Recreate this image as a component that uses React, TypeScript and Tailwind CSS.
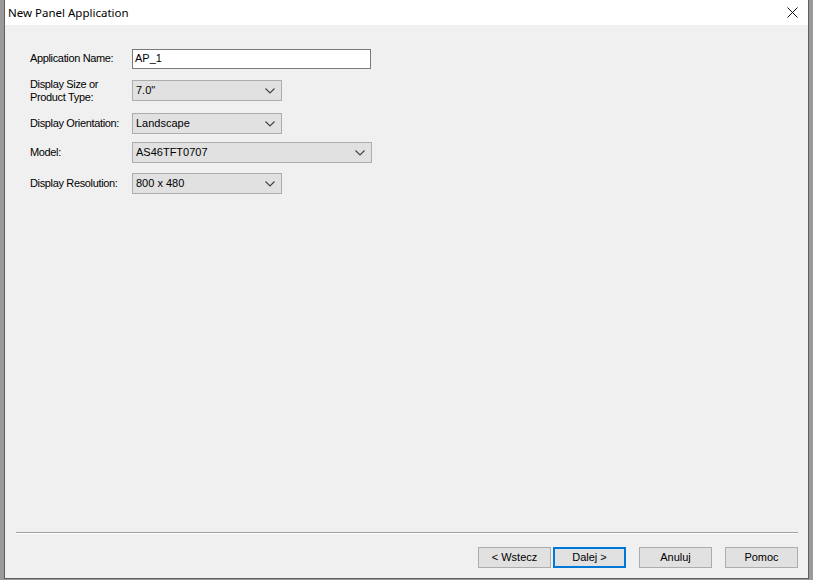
import React from "react";

function Chevron() {
  return (
    <svg width="10" height="6" viewBox="0 0 10 6" className="shrink-0">
      <path d="M0.5 0.5 L5 5 L9.5 0.5" fill="none" stroke="#404040" strokeWidth="1.1" />
    </svg>
  );
}

function Combo({ value, width }: { value: string; width: string }) {
  return (
    <div className={`${width} h-[21px] bg-[#e1e1e1] border border-[#adadad] flex items-center justify-between pl-[3px] pr-[3px]`}>
      <span className="text-[11px] leading-none text-black">{value}</span>
      <span className="w-[16px] flex justify-center">
        <Chevron />
      </span>
    </div>
  );
}

function Row({ label, children, className = "" }: { label: React.ReactNode; children: React.ReactNode; className?: string }) {
  return (
    <div className={`flex items-center h-[21px] ${className}`}>
      <div className="w-[102px] text-[11px] leading-[13px] text-black tracking-[-0.35px]">{label}</div>
      {children}
    </div>
  );
}

function Btn({ label, primary = false, className = "" }: { label: string; primary?: boolean; className?: string }) {
  return (
    <div
      className={`w-[73px] h-[21px] bg-[#e1e1e1] flex items-center justify-center text-[11px] text-black ${
        primary ? "border-2 border-[#0078d7]" : "border border-[#adadad]"
      } ${className}`}
    >
      {label}
    </div>
  );
}

export default function App() {
  return (
    <div className="w-[813px] h-[580px] bg-[#9a9a9a] overflow-hidden" style={{ fontFamily: '"Liberation Sans", Arial, sans-serif' }}>
      <div className="ml-[4px] w-[805px] h-[579px] flex flex-col border-l border-r border-b border-[#5f5f5f] bg-[#f0f0f0]">
        {/* Title bar */}
        <div className="h-[25px] bg-white flex items-center justify-between pl-[3px] pr-[8px]">
          <span className="text-[11.5px] text-black" style={{ fontFamily: '"Noto Sans", "Open Sans", sans-serif' }}>
            New Panel Application
          </span>
          <svg width="11" height="11" viewBox="0 0 11 11" className="mr-[2px]">
            <path d="M0.5 0.5 L10.5 10.5 M10.5 0.5 L0.5 10.5" stroke="#111" strokeWidth="1" />
          </svg>
        </div>

        {/* Form */}
        <div className="flex-1 flex flex-col">
          <div className="flex flex-col pl-[25px] pt-[23px]">
            <Row label="Application Name:" className="h-[20px]">
              <div className="w-[239px] h-[20px] bg-white border border-[#7a7a7a] flex items-center pl-[2px] text-[11px] text-black">
                AP_1
              </div>
            </Row>
            <Row label={<>Display Size or<br />Product Type:</>} className="mt-[11px]">
              <Combo value={'7.0"'} width="w-[150px]" />
            </Row>
            <Row label="Display Orientation:" className="mt-[12px]">
              <Combo value="Landscape" width="w-[150px]" />
            </Row>
            <Row label="Model:" className="mt-[8px]">
              <Combo value="AS46TFT0707" width="w-[240px]" />
            </Row>
            <Row label="Display Resolution:" className="mt-[10px]">
              <Combo value="800 x 480" width="w-[150px]" />
            </Row>
          </div>

          <div className="flex-1" />

          {/* Separator */}
          <div className="ml-[11px] mr-[10px] border-t border-[#a0a0a0] border-b border-b-white" />

          {/* Buttons */}
          <div className="flex justify-end pr-[10px] pt-[13px] pb-[10px]">
            <Btn label="< Wstecz" />
            <Btn label="Dalej >" primary className="ml-[2px]" />
            <Btn label="Anuluj" className="ml-[13px]" />
            <Btn label="Pomoc" className="ml-[13px]" />
          </div>
        </div>
      </div>
    </div>
  );
}
